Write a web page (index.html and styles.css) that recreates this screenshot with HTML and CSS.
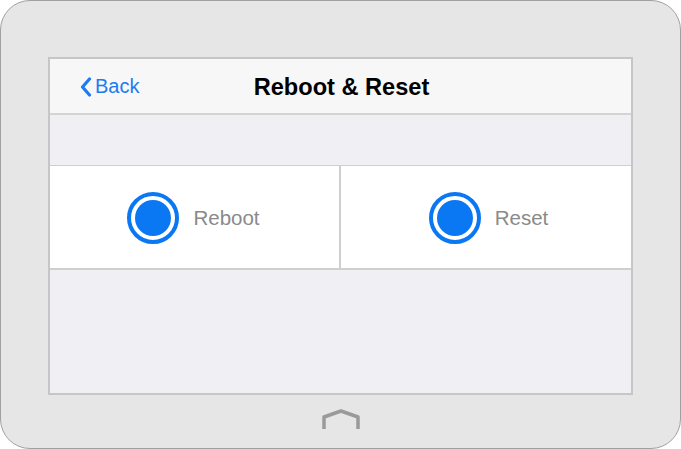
FILE: index.html
```html
<!DOCTYPE html>
<html>
<head>
<meta charset="utf-8">
<link rel="stylesheet" href="styles.css">
</head>
<body>
<div class="device">
  <div class="screen">
    <div class="navbar">
      <div class="back">
        <svg class="chev" width="12" height="20" viewBox="0 0 12 20"><path d="M9.5 2 L2.5 10 L9.5 18" fill="none" stroke="#1b7cf2" stroke-width="3.2" stroke-linecap="round" stroke-linejoin="round"/></svg>
        <span>Back</span>
      </div>
      <div class="title">Reboot &amp; Reset</div>
    </div>
    <div class="spacer"></div>
    <div class="row">
      <div class="cell">
        <span class="radio"><span class="dot"></span></span>
        <span class="label">Reboot</span>
      </div>
      <div class="cell">
        <span class="radio"><span class="dot"></span></span>
        <span class="label">Reset</span>
      </div>
    </div>
    <div class="rest"></div>
  </div>
  <div class="home">
    <svg width="40" height="22" viewBox="0 0 40 22"><path d="M3 20 V8 L20 2 L37 8 V20" fill="none" stroke="#9a9a9a" stroke-width="3.5" stroke-linejoin="round"/></svg>
  </div>
</div>
</body>
</html>
```
FILE: styles.css
```css
html, body {
  margin: 0;
  padding: 0;
  background: #ffffff;
}
body {
  width: 681px;
  height: 449px;
  overflow: hidden;
  font-family: "Liberation Sans", Arial, sans-serif;
}
.device {
  width: 681px;
  height: 449px;
  box-sizing: border-box;
  background: #e6e6e6;
  border: 1px solid #a0a0a0;
  border-radius: 30px;
  padding: 56px 47px 0 47px;
  display: flex;
  flex-direction: column;
}
.screen {
  height: 338px;
  box-sizing: border-box;
  border: 2px solid #c6c6c6;
  background: #efeff4;
  display: flex;
  flex-direction: column;
}
.navbar {
  height: 54px;
  background: #f7f7f7;
  border-bottom: 2px solid #d4d4d4;
  position: relative;
  display: flex;
  align-items: center;
  justify-content: center;
  flex-shrink: 0;
}
.back {
  position: absolute;
  left: 30px;
  top: 16px;
  display: flex;
  align-items: center;
  gap: 3px;
  color: #1b7cf2;
  font-size: 20px;
}
.chev {
  display: block;
}
.title {
  font-size: 23.6px;
  font-weight: bold;
  color: #000;
  margin-top: 3px;
  margin-left: 2px;
}
.spacer {
  height: 50px;
  flex-shrink: 0;
}
.row {
  height: 102px;
  flex-shrink: 0;
  background: #fff;
  border-top: 1px solid #cfcfcf;
  border-bottom: 2px solid #cfcfcf;
  display: grid;
  grid-template-columns: 291px 1fr;
}
.cell {
  display: flex;
  align-items: center;
  justify-content: center;
  gap: 14px;
}
.cell:first-child {
  border-right: 2px solid #cfcfcf;
  padding-left: 4px;
}
.cell:last-child {
  padding-left: 5px;
}
.radio {
  width: 52px;
  height: 52px;
  box-sizing: border-box;
  border: 4px solid #0b78f3;
  border-radius: 50%;
  display: flex;
  align-items: center;
  justify-content: center;
  margin-top: 1px;
}
.dot {
  width: 36px;
  height: 36px;
  border-radius: 50%;
  background: #0b78f3;
}
.label {
  font-size: 20.5px;
  color: #8a8a8a;
  margin-top: 1px;
}
.cell:first-child .label {
  margin-right: 6px;
}
.rest {
  flex: 1;
}
.home {
  display: flex;
  justify-content: center;
  margin-top: 14px;
}
.home svg {
  display: block;
}
```
